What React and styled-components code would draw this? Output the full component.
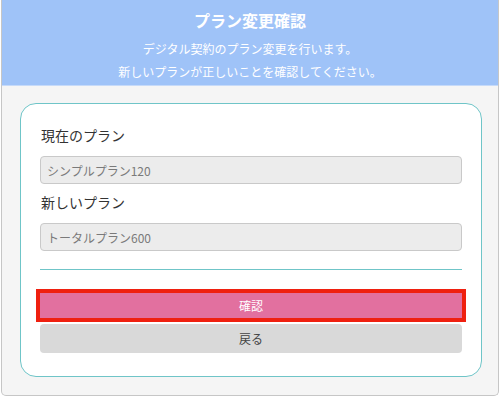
import React from 'react';
import styled, { createGlobalStyle } from 'styled-components';

const GlobalStyle = createGlobalStyle`
    body {
        margin: 0;
        font-family: "Noto Sans CJK JP", "Noto Sans", sans-serif;
        background: #ffffff;
    }
`;

const Frame = styled.div`
    box-sizing: border-box;
    width: 498px;
    height: 396px;
    margin: 0 1px;
    border: 1px solid #c6c6c6;
    border-top: none;
    border-radius: 0 0 5px 5px;
    overflow: hidden;
    display: flex;
    flex-direction: column;
    background: #f5f5f5;
`;

const Header = styled.header`
    background: #9fc3f8;
    border-bottom: 1px solid #c6daf9;
    padding: 8px 0 2px;
    color: #ffffff;
    text-align: center;
`;

const Title = styled.h1`
    margin: 0 0 5px;
    font-size: 16px;
    line-height: 24px;
    font-weight: 700;
`;

const Lead = styled.p`
    margin: 0;
    font-size: 12px;
    line-height: 23px;
`;

const Body = styled.main`
    flex: 1;
    padding: 17px 16px 18px 18px;
    display: flex;
`;

const Card = styled.section`
    flex: 1;
    background: #ffffff;
    border: 1px solid #6fc5c8;
    border-radius: 16px;
    padding: 21px 19px 22px;
    display: flex;
    flex-direction: column;
`;

const Label = styled.label`
    font-size: 14px;
    line-height: 20px;
    color: #333333;
    margin-top: ${p => (p.$first ? '0' : '8px')};
    padding-left: 1px;
`;

const Field = styled.div`
    box-sizing: border-box;
    height: 28px;
    margin-top: 11px;
    padding: 0 6px;
    display: flex;
    align-items: center;
    background: #ececec;
    border: 1px solid #c9c9c9;
    border-radius: 4px;
    font-size: 12px;
    color: #7a7a7a;
`;

const Divider = styled.hr`
    margin: 18px 0 0;
    border: none;
    border-top: 1px solid #6fc5c8;
`;

const Button = styled.button`
    box-sizing: border-box;
    font-family: inherit;
    font-size: 12px;
    cursor: pointer;
    border-radius: ${p => (p.$primary ? '0' : '4px')};
    height: ${p => (p.$primary ? '33px' : '29px')};
    margin: ${p => (p.$primary ? '19px -4px 0' : '2px 0 0')};
    border: ${p => (p.$primary ? '4px solid #ef2010' : 'none')};
    background: ${p => (p.$primary ? '#e2709f' : '#d9d9d9')};
    color: ${p => (p.$primary ? '#ffffff' : '#444444')};
`;

export default function App() {
    return (
        <>
            <GlobalStyle />
            <Frame>
                <Header>
                    <Title>プラン変更確認</Title>
                    <Lead>デジタル契約のプラン変更を行います。</Lead>
                    <Lead>新しいプランが正しいことを確認してください。</Lead>
                </Header>
                <Body>
                    <Card>
                        <Label $first>現在のプラン</Label>
                        <Field>シンプルプラン120</Field>
                        <Label>新しいプラン</Label>
                        <Field>トータルプラン600</Field>
                        <Divider />
                        <Button $primary>確認</Button>
                        <Button>戻る</Button>
                    </Card>
                </Body>
            </Frame>
        </>
    );
}
